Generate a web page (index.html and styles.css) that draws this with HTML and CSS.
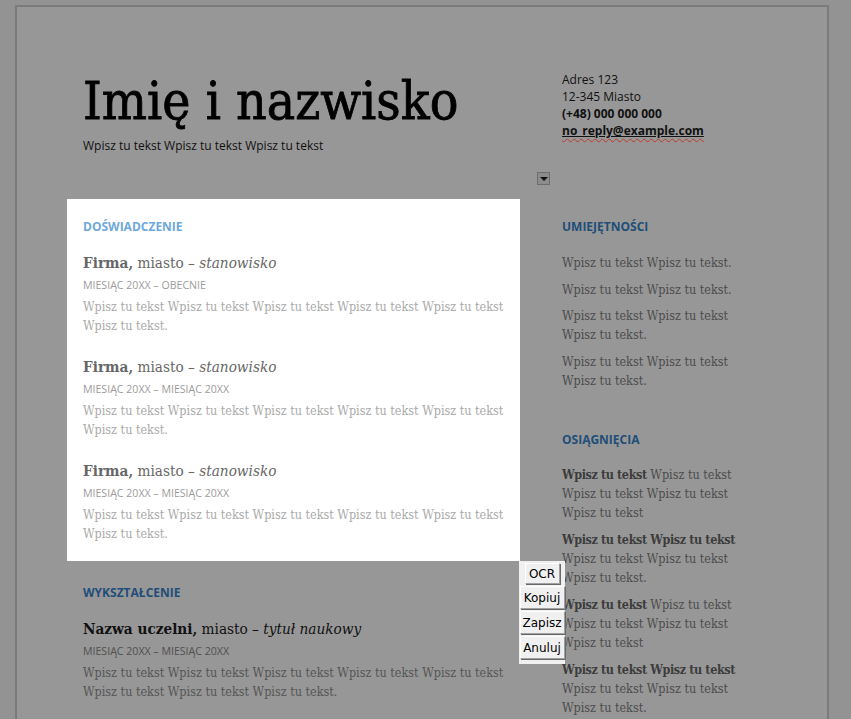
FILE: index.html
```html
<!DOCTYPE html>
<html lang="pl">
<head>
<meta charset="utf-8">
<title>CV</title>
<link rel="stylesheet" href="styles.css">
</head>
<body>
<div class="page">
  <header class="header">
    <div class="name-block">
      <h1 class="name">Imię i nazwisko</h1>
      <p class="tagline">Wpisz tu tekst Wpisz tu tekst Wpisz tu tekst</p>
    </div>
    <div class="contact">
      <div>Adres 123</div>
      <div>12-345 Miasto</div>
      <div class="strong">(+48) 000 000 000</div>
      <div class="strong"><span class="email"><span class="spell">no_reply@example.com</span></span></div>
    </div>
    <div class="dropdown"><span class="tri"></span></div>
  </header>

  <div class="body">
    <div class="main">
      <section class="section selected">
        <h2 class="heading">DOŚWIADCZENIE</h2>
        <div class="entry">
          <div class="entry-title"><b>Firma,</b> miasto – <i>stanowisko</i></div>
          <div class="date">MIESIĄC 20XX – OBECNIE</div>
          <p class="text">Wpisz tu tekst Wpisz tu tekst Wpisz tu tekst Wpisz tu tekst Wpisz tu tekst Wpisz tu tekst.</p>
        </div>
        <div class="entry">
          <div class="entry-title"><b>Firma,</b> miasto – <i>stanowisko</i></div>
          <div class="date">MIESIĄC 20XX – MIESIĄC 20XX</div>
          <p class="text">Wpisz tu tekst Wpisz tu tekst Wpisz tu tekst Wpisz tu tekst Wpisz tu tekst Wpisz tu tekst.</p>
        </div>
        <div class="entry">
          <div class="entry-title"><b>Firma,</b> miasto – <i>stanowisko</i></div>
          <div class="date">MIESIĄC 20XX – MIESIĄC 20XX</div>
          <p class="text">Wpisz tu tekst Wpisz tu tekst Wpisz tu tekst Wpisz tu tekst Wpisz tu tekst Wpisz tu tekst.</p>
        </div>
        <div class="ocr-menu">
          <button class="btn btn-ocr">OCR</button>
          <button class="btn">Kopiuj</button>
          <button class="btn">Zapisz</button>
          <button class="btn">Anuluj</button>
        </div>
      </section>

      <section class="section edu">
        <h2 class="heading">WYKSZTAŁCENIE</h2>
        <div class="entry">
          <div class="entry-title"><b>Nazwa uczelni,</b> miasto – <i>tytuł naukowy</i></div>
          <div class="date">MIESIĄC 20XX – MIESIĄC 20XX</div>
          <p class="text">Wpisz tu tekst Wpisz tu tekst Wpisz tu tekst Wpisz tu tekst Wpisz tu tekst Wpisz tu tekst Wpisz tu tekst Wpisz tu tekst.</p>
        </div>
      </section>
    </div>

    <aside class="side">
      <section class="side-section">
        <h2 class="heading">UMIEJĘTNOŚCI</h2>
        <p class="item">Wpisz tu tekst Wpisz tu tekst.</p>
        <p class="item">Wpisz tu tekst Wpisz tu tekst.</p>
        <p class="item">Wpisz tu tekst Wpisz tu tekst Wpisz tu tekst.</p>
        <p class="item">Wpisz tu tekst Wpisz tu tekst Wpisz tu tekst.</p>
      </section>
      <section class="side-section awards">
        <h2 class="heading">OSIĄGNIĘCIA</h2>
        <p class="item"><b>Wpisz tu tekst</b> Wpisz tu tekst Wpisz tu tekst Wpisz tu tekst Wpisz tu tekst</p>
        <p class="item"><b>Wpisz tu tekst Wpisz tu tekst</b> Wpisz tu tekst Wpisz tu tekst Wpisz tu tekst.</p>
        <p class="item"><b>Wpisz tu tekst</b> Wpisz tu tekst Wpisz tu tekst Wpisz tu tekst Wpisz tu tekst</p>
        <p class="item"><b>Wpisz tu tekst Wpisz tu tekst</b> Wpisz tu tekst Wpisz tu tekst Wpisz tu tekst.</p>
      </section>
    </aside>
  </div>
</div>
</body>
</html>
```
FILE: styles.css
```css
html, body {
  margin: 0;
  padding: 0;
  height: 100%;
  overflow: hidden;
}
body {
  background: #939393;
  font-family: "DejaVu Serif", serif;
  font-stretch: condensed;
}
.page {
  position: relative;
  margin: 5px 0 0 15px;
  width: 814px;
  min-height: 760px;
  border: 2px solid #7b7b7b;
  border-bottom: none;
  background: #979797;
  padding-left: 50px;
  box-sizing: border-box;
}
.header {
  display: flex;
  column-gap: 42px;
  height: 192px;
  padding-top: 64px;
  box-sizing: border-box;
}
.name-block {
  width: 453px;
  padding-left: 16px;
  box-sizing: border-box;
}
.name {
  margin: 0;
  font-size: 53px;
  line-height: 60px;
  font-weight: normal;
  color: #000;
  -webkit-text-stroke: 0.8px #000;
}
.tagline {
  margin: 6px 0 0;
  font-family: "Open Sans", sans-serif;
  font-stretch: normal;
  font-size: 12px;
  line-height: 17px;
  color: #111;
}
.contact {
  font-family: "Open Sans", sans-serif;
  font-stretch: normal;
  font-size: 12px;
  line-height: 17px;
  color: #111;
}
.contact .strong { font-weight: bold; }
.email { text-decoration: underline solid #111; }
.spell {
  text-decoration: underline wavy #c0392b;
  text-underline-offset: 3px;
  text-decoration-thickness: 1px;
}
.dropdown {
  position: absolute;
  left: 520px;
  top: 165px;
  width: 11px;
  height: 11px;
  border: 1px solid #6d6d6d;
  background: #8c8c8c;
  display: flex;
  align-items: center;
  justify-content: center;
}
.tri {
  width: 0;
  height: 0;
  border-left: 4px solid transparent;
  border-right: 4px solid transparent;
  border-top: 4px solid #111;
}
.body {
  display: flex;
  column-gap: 42px;
}
.main { width: 453px; }
.side { width: 185px; padding-top: 20px; }

.section { padding: 20px 16px 18px; position: relative; }
.section.selected { background: #fff; }
.section.edu { padding-top: 24px; }

.heading {
  margin: 0 0 17px;
  font-family: "Open Sans", sans-serif;
  font-stretch: normal;
  font-weight: bold;
  font-size: 12px;
  line-height: 16px;
  color: #1f4e79;
}
.selected .heading { color: #6fa8dc; }
.side .heading { margin-bottom: 18px; }
.side .awards .heading { margin-bottom: 17px; }

.entry + .entry { margin-top: 21px; }
.entry-title {
  font-size: 15.2px;
  line-height: 22px;
  color: #111;
}
.entry-title b { font-weight: bold; }
.date {
  margin-top: 3px;
  font-family: "Open Sans", sans-serif;
  font-stretch: normal;
  font-size: 10.6px;
  line-height: 16px;
  color: #505050;
}
.text {
  margin: 4px 0 0;
  font-size: 12.5px;
  line-height: 19px;
  color: #555;
}
.selected .entry-title { color: #666; }
.selected .date { color: #9c9c9c; }
.selected .text { color: #aaa; }

.item {
  margin: 0 0 7.5px;
  font-size: 12.5px;
  line-height: 19px;
  color: #4c4c4c;
}
.item b { color: #3c3c3c; letter-spacing: -0.4px; }
.awards { margin-top: 42.5px; }
.awards .item { margin-bottom: 8px; }

.ocr-menu {
  position: absolute;
  left: 452px;
  top: 100%;
  width: 46px;
  height: 103px;
  background: #f0f0f0;
  display: flex;
  flex-direction: column;
  align-items: center;
  padding-top: 2px;
  box-sizing: border-box;
  gap: 2px;
  z-index: 2;
}
.btn {
  font-family: "DejaVu Sans", sans-serif;
  font-stretch: normal;
  font-size: 12px;
  color: #000;
  background: #f0f0f0;
  border: 1px solid;
  border-color: #fff #a0a0a0 #a0a0a0 #fff;
  box-shadow: 1px 1px 0 #696969;
  padding: 0;
  width: 45px;
  height: 23px;
  margin: 0;
}
.btn-ocr { width: 35px; height: 21px; }
```
